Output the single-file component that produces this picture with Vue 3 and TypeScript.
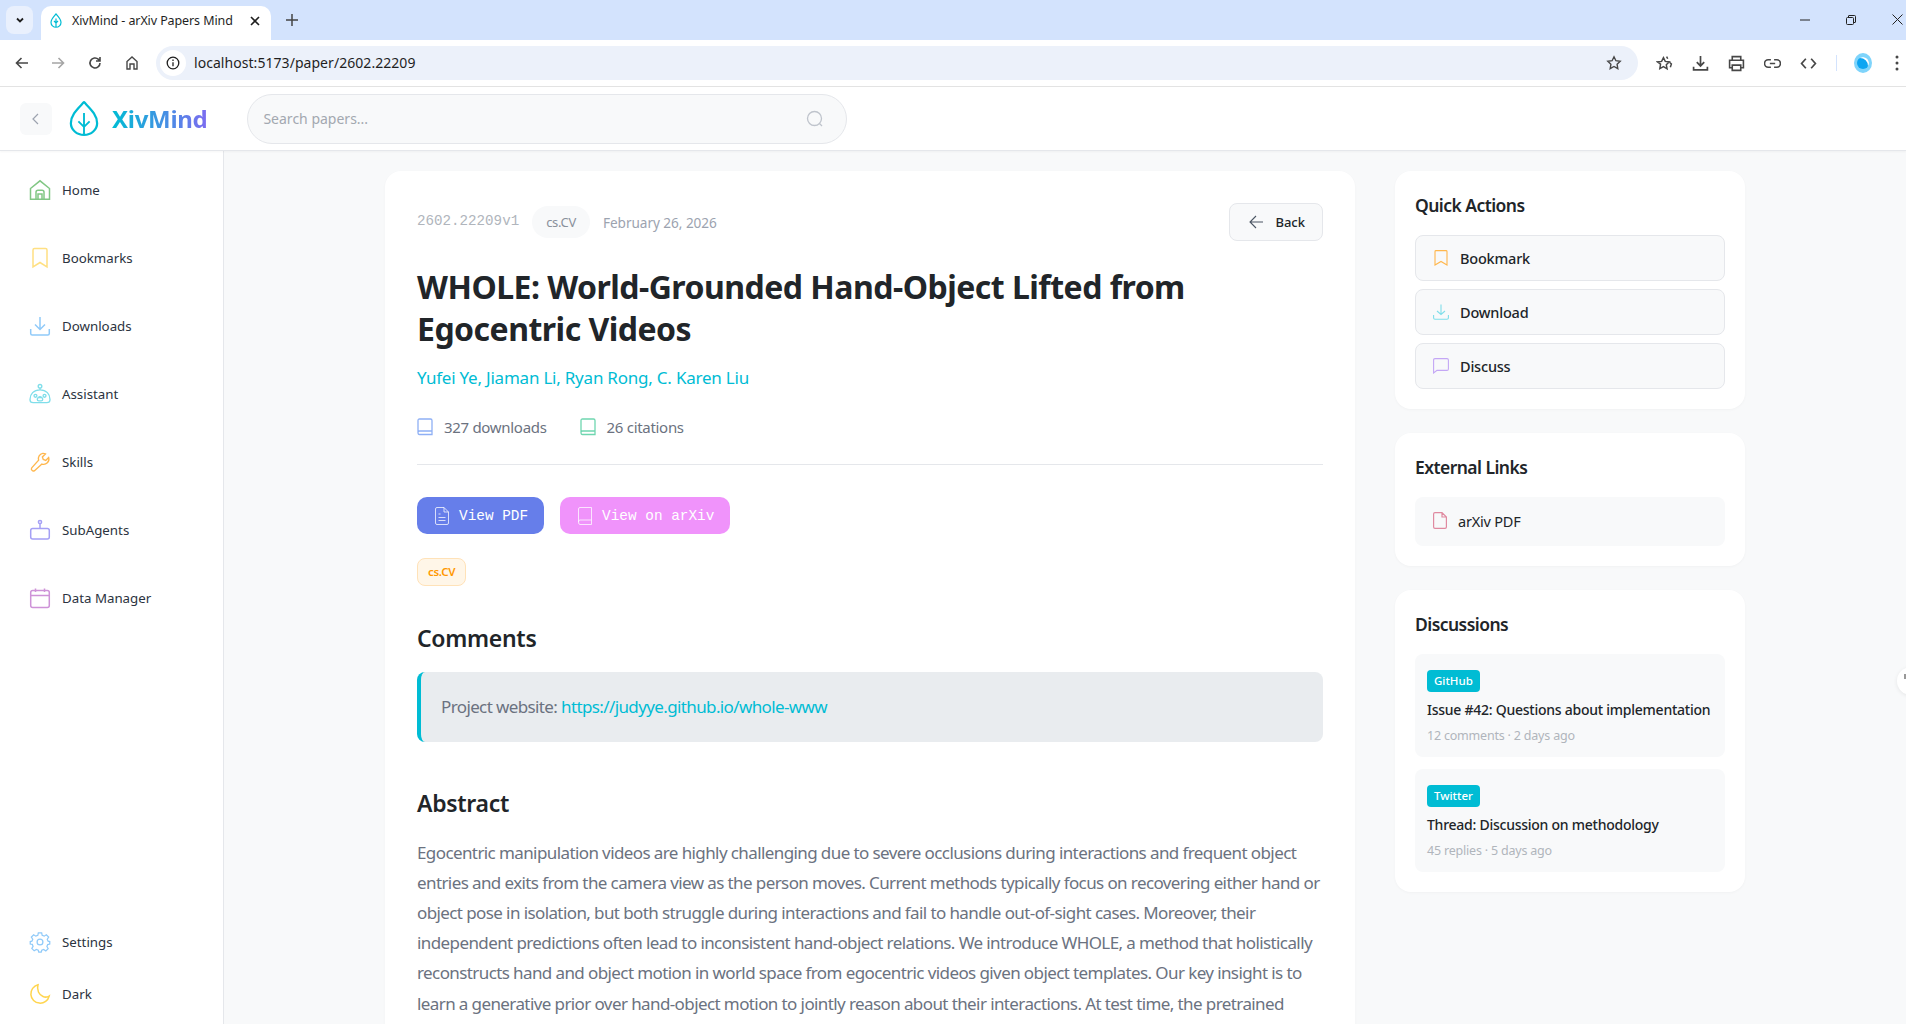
<script setup lang="ts">
const navTop = [
  { label: "Home", icon: "home" },
  { label: "Bookmarks", icon: "bookmarks" },
  { label: "Downloads", icon: "downloads" },
  { label: "Assistant", icon: "assistant" },
  { label: "Skills", icon: "skills" },
  { label: "SubAgents", icon: "subagents" },
  { label: "Data Manager", icon: "data" },
];

const abstractLines = [
  "Egocentric manipulation videos are highly challenging due to severe occlusions during interactions and frequent object",
  "entries and exits from the camera view as the person moves. Current methods typically focus on recovering either hand or",
  "object pose in isolation, but both struggle during interactions and fail to handle out-of-sight cases. Moreover, their",
  "independent predictions often lead to inconsistent hand-object relations. We introduce WHOLE, a method that holistically",
  "reconstructs hand and object motion in world space from egocentric videos given object templates. Our key insight is to",
  "learn a generative prior over hand-object motion to jointly reason about their interactions. At test time, the pretrained",
];

const discussions = [
  { tag: "GitHub", title: "Issue #42: Questions about implementation", meta: "12 comments · 2 days ago" },
  { tag: "Twitter", title: "Thread: Discussion on methodology", meta: "45 replies · 5 days ago" },
];
</script>

<template>
  <div class="window">
    <div class="tabstrip">
      <div class="tab-menu">
        <svg width="12" height="12" viewBox="0 0 12 12" fill="none" stroke="#1f1f1f" stroke-width="1.8"><path d="M3 4.500 6 7.500 9 4.500" /></svg>
      </div>
      <div class="tab">
        <svg width="12" height="15" viewBox="0 0 24 30" fill="none" stroke="#00bcd4" stroke-width="2.400"><path d="M12 2C6 9 2 13 2 19a10 9.500 0 0 0 20 0C22 13 18 9 12 2ZM12 11v18M8 16l4 4 4-4" /></svg>
        <span class="tab-title">XivMind - arXiv Papers Mind</span>
        <svg class="tab-close" width="10" height="10" viewBox="0 0 10 10" stroke="#1f1f1f" stroke-width="1.600"><path d="M1 1l8 8M9 1 1 9" /></svg>
      </div>
      <svg class="new-tab" width="12" height="12" viewBox="0 0 12 12" stroke="#444" stroke-width="1.500"><path d="M6 0v12M0 6h12" /></svg>
      <div class="win-controls">
        <svg width="10" height="10" viewBox="0 0 10 10" stroke="#222" fill="none"><path d="M0 5h10" /></svg>
        <svg width="10" height="10" viewBox="0 0 10 10" stroke="#222" fill="none"><rect x=".5" y="2.500" width="7" height="7" rx="1" /><path d="M2.500 2.500V1q0-.5.5-.5h5.500q1 0 1 1V7q0 .5-.5 .5H8" /></svg>
        <svg width="11" height="11" viewBox="0 0 11 11" stroke="#222" fill="none"><path d="M.5.500l10 10M10.500.500l-10 10" /></svg>
      </div>
    </div>

    <div class="toolbar">
      <svg width="16" height="16" viewBox="0 0 16 16" fill="none" stroke="#474747" stroke-width="1.600"><path d="M14 8H2.500M7.500 3 2.500 8l5 5" /></svg>
      <svg class="forward" width="16" height="16" viewBox="0 0 16 16" fill="none" stroke="#a5a5a5" stroke-width="1.600"><path d="M2 8h11.500M8.500 3l5 5-5 5" /></svg>
      <svg class="reload" width="16" height="16" viewBox="0 0 16 16" fill="none" stroke="#474747" stroke-width="1.600"><path d="M13 8a5 5 0 1 1-1.500-3.600L13 6M13 2v4H9" /></svg>
      <svg class="homebtn" width="16" height="16" viewBox="0 0 16 16" fill="none" stroke="#474747" stroke-width="1.400"><path d="M3 14V6.500L8 2l5 4.500V14h-3V9H6v5Z" /></svg>
      <div class="omnibox">
        <span class="site-info">
          <svg width="14" height="14" viewBox="0 0 14 14" fill="none" stroke="#1f1f1f" stroke-width="1.300"><circle cx="7" cy="7" r="5.800" /><path d="M7 6.200v4M7 3.500v1.400" /></svg>
        </span>
        <span class="url">localhost:5173/paper/2602.22209</span>
        <svg class="omni-star" width="16" height="16" viewBox="0 0 16 16" fill="none" stroke="#474747" stroke-width="1.400"><path d="m8 1.800 1.900 3.900 4.300.600-3.100 3 .7 4.300L8 11.500l-3.800 2.100.7-4.300-3.100-3 4.300-.600Z" /></svg>
      </div>
      <div class="ext-icons">
        <svg width="17" height="17" viewBox="0 0 16 16" fill="none" stroke="#474747" stroke-width="1.400"><path d="m7 2.500 1.700 3.500 3.800.500-2.800 2.700.7 3.800L7 11l-3.400 1.800.7-4.300L1.500 6.500l3.800-.500ZM10 1.500l1 2M13 7l1.500 1.500-1 3" /></svg>
        <svg width="17" height="17" viewBox="0 0 16 16" fill="none" stroke="#474747" stroke-width="1.600"><path d="M8 1v9M4.500 6.800 8 10.300l3.500-3.500M1.500 11v3h13v-3" /></svg>
        <svg width="17" height="17" viewBox="0 0 16 16" fill="none" stroke="#474747" stroke-width="1.500"><path d="M4 5V1.500h8V5M4 12H1.500V5h13v7H12M4 9.500h8v5H4Z" /></svg>
        <svg width="17" height="17" viewBox="0 0 16 16" fill="none" stroke="#474747" stroke-width="1.500"><path d="M6.500 4.500H4a3.500 3.500 0 0 0 0 7h2.500M9.500 4.500H12a3.500 3.500 0 0 1 0 7H9.500M5.500 8h5" /></svg>
        <svg width="17" height="17" viewBox="0 0 16 16" fill="none" stroke="#474747" stroke-width="1.600"><path d="M5.500 3.500 1.500 8l4 4.500M10.500 3.500l4 4.500-4 4.500" /></svg>
        <span class="ext-divider"></span>
        <span class="avatar"><span class="avatar-mark"></span></span>
        <svg class="kebab" width="4" height="16" viewBox="0 0 4 16" fill="#474747"><circle cx="2" cy="2" r="1.500" /><circle cx="2" cy="8" r="1.500" /><circle cx="2" cy="14" r="1.500" /></svg>
      </div>
    </div>

    <header class="app-header">
      <button type="button" class="collapse">
        <svg width="12" height="14" viewBox="0 0 12 14" fill="none" stroke="#9ca3af" stroke-width="1.200"><path d="M8 2 3 7l5 5" /></svg>
      </button>
      <div class="brand">
        <svg width="30" height="37" viewBox="0 0 32 38" fill="none" stroke="#00bcd4" stroke-width="2.400" stroke-linejoin="round"><path d="M16 1.500C9 9 2 15 2 24a14 12.500 0 0 0 28 0C30 15 23 9 16 1.500Z" /><path d="M16 13v23.500M10 22l6 6 6-6" stroke-width="2" /></svg>
        <span class="brand-name">XivMind</span>
      </div>
      <label class="search">
        <input type="search" placeholder="Search papers..." autocomplete="off" />
        <svg width="18" height="18" viewBox="0 0 18 18" fill="none" stroke="#bfc4cc" stroke-width="1.300"><circle cx="8.500" cy="8.500" r="7" /><path d="m13.500 13.500 2.500 2.500" /></svg>
      </label>
    </header>

    <div class="body">
      <aside class="sidebar">
        <nav class="nav">
          <a v-for="item in navTop" :key="item.label" class="nav-item">
            <svg v-if="item.icon === 'home'" class="nav-icon" viewBox="0 0 20 20" fill="none" stroke="#81c784"><path d="M.5 8.500 10 .8l9.500 7.700v10.700h-19ZM6 19.200v-7q0-2 2-2h4q2 0 2 2v7M8 19v-5h4v5" /></svg>
            <svg v-else-if="item.icon === 'bookmarks'" class="nav-icon" viewBox="0 0 20 20" fill="none" stroke="#ffe082"><path d="M3 2q0-1.500 1.500-1.500h11Q17 .5 17 2v17l-7-4.500L3 19Z" /></svg>
            <svg v-else-if="item.icon === 'downloads'" class="nav-icon" viewBox="0 0 20 20" fill="none" stroke="#90caf9"><path d="M10 1v12M5 8.500l5 5 5-5M.7 13v4.500q0 1.500 1.500 1.500h15.600q1.500 0 1.500-1.500V13" /></svg>
            <svg v-else-if="item.icon === 'assistant'" class="nav-icon wide" viewBox="0 0 24 22" fill="none" stroke="#80deea"><circle cx="12" cy="2.500" r="2" /><path d="M12 4.500v2M1 17c0-6 4-10.500 11-10.500S23 11 23 17q0 3.500-3.500 3.500h-15Q1 20.500 1 17Z" /><circle cx="7" cy="13" r="1.600" /><circle cx="17" cy="13" r="1.600" /><rect x="9" y="15" width="6" height="3.500" rx="1.700" /><path d="M10 15q2-2 4 0" /></svg>
            <svg v-else-if="item.icon === 'skills'" class="nav-icon wide" viewBox="0 0 22 22" fill="none" stroke="#ffb74d"><path d="M14 1.500a6 6 0 0 1 3 .600L13.600 5.500l1 2.700 2.700 1L20.500 6a5.800 5.800 0 0 1-7.400 7.300L5 20.500q-1.500 1-2.800-.300t-.300-2.800L9.500 9A5.800 5.800 0 0 1 14 1.500Z" /></svg>
            <svg v-else-if="item.icon === 'subagents'" class="nav-icon" viewBox="0 0 20 20" fill="none" stroke="#a5a0f5"><circle cx="10" cy="2" r="1.600" /><path d="M10 3.600v5" /><rect x=".7" y="8.600" width="18.600" height="10.500" rx="2" /></svg>
            <svg v-else class="nav-icon" viewBox="0 0 20 20" fill="none" stroke="#ce93d8"><rect x=".7" y="2.500" width="18.600" height="17" rx="2" /><path d="M.7 7.500h18.600M5.500.500v3.500M14.500.500v3.500" /></svg>
            <span>{{ item.label }}</span>
          </a>
        </nav>
        <div class="nav nav--bottom">
          <a class="nav-item nav-item--settings">
            <svg class="nav-icon wide" viewBox="0 0 24 24" fill="none" stroke="#90caf9"><circle cx="12" cy="12" r="3.500" /><path d="M10 1h4l.6 3 2.400 1 2.600-1.700 2.800 2.800L20.700 8.700l1 2.300 2 .5v3l-2.500.6-.9 2.300 1.500 2.600-2.800 2.800L16.400 21l-2.300.9-.6 2.100h-3l-.6-2.100-2.300-.9-2.600 1.600-2.800-2.800 1.500-2.600-.9-2.300L.3 14.500v-3l2-.5 1-2.300L1.600 6.100l2.800-2.800L7 5l2.400-1Z" /></svg>
            <span>Settings</span>
          </a>
          <a class="nav-item nav-item--dark">
            <svg class="nav-icon" viewBox="0 0 20 20" fill="none" stroke="#ffd54f"><path d="M8 .8a9.300 9.300 0 1 0 11.200 11.200c-1.500 1-4 1.500-6.200.500C9 11 6.500 6 8 .8Z" /></svg>
            <span>Dark</span>
          </a>
        </div>
      </aside>

      <main class="content">
        <div class="columns">
          <article class="paper">
            <div class="paper-meta">
              <span class="paper-id">2602.22209v1</span>
              <span class="cat-chip">cs.CV</span>
              <span class="paper-date">February 26, 2026</span>
              <button type="button" class="back">
                <svg width="16" height="16" viewBox="0 0 16 16" fill="none" stroke="#4b5563" stroke-width="1.100"><path d="M15 8H2M8 2 2 8l6 6" /></svg>
                Back
              </button>
            </div>
            <h1>WHOLE: World-Grounded Hand-Object Lifted from Egocentric Videos</h1>
            <p class="authors">Yufei Ye, Jiaman Li, Ryan Rong, C. Karen Liu</p>
            <div class="stats">
              <span class="stat">
                <svg width="16" height="18" viewBox="0 0 16 18" fill="none" stroke="#8fb0f5" stroke-width="1.300"><path d="M1 14.500V2.500Q1 1 2.500 1h11q1.500 0 1.500 1.500v14H2.500Q1 16.500 1 14.500Zm0 0Q1 13 2.500 13H15" /></svg>
                327 downloads
              </span>
              <span class="stat">
                <svg width="16" height="18" viewBox="0 0 16 18" fill="none" stroke="#6fd6b0" stroke-width="1.300"><path d="M1 14.500V2.500Q1 1 2.500 1h11q1.500 0 1.500 1.500v14H2.500Q1 16.500 1 14.500Zm0 0Q1 13 2.500 13H15" /></svg>
                26 citations
              </span>
            </div>
            <div class="actions">
              <a class="btn btn--pdf">
                <svg width="14" height="18" viewBox="0 0 14 18" fill="none" stroke="#fff" stroke-opacity=".75" stroke-width="1"><path d="M9 .5H2Q.5.500.5 2v14q0 1.500 1.500 1.500h10q1.500 0 1.500-1.500V5ZM9 .5V5h4.500M3.500 7h2M3.500 10.500h7M3.500 13.500h7" /></svg>
                View PDF
              </a>
              <a class="btn btn--arxiv">
                <svg width="14" height="18" viewBox="0 0 14 18" fill="none" stroke="#fff" stroke-opacity=".75" stroke-width="1"><path d="M.5 15V2Q.5.500 2 .500h11.500v17H2Q.5 17.500.5 15Zm0 0Q.5 13 2 13h11.500" /></svg>
                View on arXiv
              </a>
            </div>
            <span class="tag">cs.CV</span>
            <h2 class="section-title">Comments</h2>
            <div class="comment">
              Project website: <a>https://judyye.github.io/whole-www</a>
            </div>
            <h2 class="section-title section-title--abstract">Abstract</h2>
            <p class="abstract">
              <span v-for="line in abstractLines" :key="line">{{ line }}</span>
            </p>
          </article>

          <div class="rail">
            <section class="card">
              <h3>Quick Actions</h3>
              <div class="stack">
                <a class="quick">
                  <svg width="16" height="16" viewBox="-1 0 16 16" fill="none" stroke="#ffb74d" stroke-width="1.100"><path d="M1 1.500Q1 .6 2 .6h10q1 0 1 .9V15l-6-3.500L1 15Z" /></svg>
                  Bookmark
                </a>
                <a class="quick">
                  <svg width="16" height="16" viewBox="0 0 16 16" fill="none" stroke="#80deea" stroke-width="1.100"><path d="M8 .5v10M4 7l4 3.500L12 7M.6 11v3q0 1.200 1.400 1.200h12q1.400 0 1.400-1.200v-3" /></svg>
                  Download
                </a>
                <a class="quick">
                  <svg width="16" height="16" viewBox="0 0 16 16" fill="none" stroke="#c4a7f5" stroke-width="1.100"><path d="M.6 2Q.6.600 2 .600h12q1.400 0 1.400 1.400v9q0 1.400-1.400 1.400H4l-3.400 2.600Z" /></svg>
                  Discuss
                </a>
              </div>
            </section>

            <section class="card">
              <h3>External Links</h3>
              <a class="ext-link">
                <svg width="14" height="17" viewBox="0 0 14 17" fill="none" stroke="#e08aa0" stroke-width="1.200"><path d="M9 .6H2Q.6.600.6 2v13q0 1.400 1.400 1.400h10q1.400 0 1.400-1.400V5ZM9 .6V5h4.400" /></svg>
                arXiv PDF
              </a>
            </section>

            <section class="card">
              <h3>Discussions</h3>
              <div class="stack stack--disc">
                <div v-for="d in discussions" :key="d.tag" class="disc">
                  <span class="disc-tag">{{ d.tag }}</span>
                  <div class="disc-title">{{ d.title }}</div>
                  <div class="disc-meta">{{ d.meta }}</div>
                </div>
              </div>
            </section>
          </div>
        </div>
      </main>
    </div>

    <span class="edge-handle"></span>
  </div>
</template>

<style>
html,
body {
  margin: 0;
  height: 100%;
  overflow: hidden;
}
</style>

<style scoped>
* {
  box-sizing: border-box;
}

.window {
  position: relative;
  display: flex;
  flex-direction: column;
  width: 1906px;
  height: 1024px;
  overflow: hidden;
  background: #f8f9fa;
  color: #212529;
  font-family: "Noto Sans", "Open Sans", sans-serif;
}

.tabstrip {
  display: flex;
  align-items: flex-end;
  flex: none;
  height: 40px;
  padding-left: 6px;
  background: #d3e3fd;
}

.tab-menu {
  display: grid;
  place-items: center;
  width: 27px;
  height: 28px;
  margin-bottom: 6px;
  border-radius: 8px;
  background: #e9f0fd;
}

.tab {
  display: flex;
  align-items: center;
  width: 230px;
  height: 34px;
  margin-left: 8px;
  padding: 0 11px 5px 9px;
  border-radius: 10px 10px 0 0;
  background: #fff;
}

.tab-title {
  flex: 1;
  margin-left: 10px;
  color: #1f1f1f;
  font-size: 12.500px;
  letter-spacing: -0.1px;
  white-space: nowrap;
}

.new-tab {
  margin: 0 0 14px 15px;
}

.win-controls {
  display: flex;
  align-items: center;
  gap: 36px;
  margin-left: auto;
  margin-bottom: 15px;
  padding-right: 3px;
}

.toolbar {
  display: flex;
  align-items: center;
  flex: none;
  height: 47px;
  padding-left: 14px;
  border-bottom: 1px solid #e3e3e3;
  background: #fff;
}

.forward {
  margin-left: 20px;
}

.reload,
.homebtn {
  margin-left: 21px;
}

.omnibox {
  display: flex;
  align-items: center;
  width: 1482px;
  height: 34px;
  margin-left: 16px;
  padding: 0 16px 0 4px;
  border-radius: 17px;
  background: #ecf1fa;
}

.site-info {
  display: grid;
  place-items: center;
  width: 26px;
  height: 26px;
  border-radius: 50%;
  background: #fff;
}

.url {
  margin: -2px 0 0 8px;
  color: #1f1f1f;
  font-size: 14px;
  letter-spacing: 0.05px;
}

.omni-star {
  margin-left: auto;
}

.ext-icons {
  display: flex;
  align-items: center;
  gap: 19.100px;
  margin-left: 17.500px;
}

.ext-divider {
  width: 1px;
  height: 16px;
  background: #d3e3fd;
}

.avatar {
  display: grid;
  place-items: center;
  width: 18px;
  height: 20px;
  margin-left: -2px;
  border-radius: 50%;
  background: #7fd4fb;
}

.avatar-mark {
  width: 12px;
  height: 12px;
  border-radius: 50%;
  background: #0ca5f2;
  box-shadow: inset -3px 3px 0 -2px #fff;
}

.kebab {
  margin-left: 4px;
}

.app-header {
  z-index: 1;
  display: flex;
  align-items: center;
  flex: none;
  height: 64px;
  padding-left: 20px;
  border-bottom: 1px solid #e5e7eb;
  background: #fff;
  box-shadow: 0 1px 2px rgba(0, 0, 0, 0.04);
}

.collapse {
  display: grid;
  place-items: center;
  width: 32px;
  height: 32px;
  padding: 0;
  border: 0;
  border-radius: 6px;
  background: #f8f9fa;
}

.brand {
  display: flex;
  align-items: center;
  gap: 13px;
  margin-left: 17px;
}

.brand-name {
  background: linear-gradient(90deg, #00bcd4, #7c6cf0);
  -webkit-background-clip: text;
  background-clip: text;
  color: transparent;
  font-size: 24px;
  font-weight: 700;
  letter-spacing: -0.3px;
}

.search {
  display: flex;
  align-items: center;
  width: 600px;
  height: 50px;
  margin-left: 40px;
  padding: 0 22px 0 15px;
  border: 1px solid #e5e7eb;
  border-radius: 25px;
  background: #f8f9fa;
}

.search input {
  flex: 1;
  min-width: 0;
  padding: 0;
  border: 0;
  outline: 0;
  background: transparent;
  color: #212529;
  font: inherit;
  font-size: 14px;
}

.search input::placeholder {
  color: #a3a8b0;
}

.body {
  display: flex;
  flex: 1;
  min-height: 0;
}

.sidebar {
  display: flex;
  flex-direction: column;
  flex: none;
  justify-content: space-between;
  width: 224px;
  padding: 5px 0 0 28px;
  border-right: 1px solid #e5e7eb;
  background: #fff;
}

.nav {
  display: flex;
  flex-direction: column;
}

.nav-item {
  display: flex;
  align-items: center;
  height: 68px;
  color: #2b3340;
  font-size: 13.300px;
}

.nav-item--settings {
  height: 52px;
}

.nav-item--dark {
  height: 52px;
  margin-bottom: 4px;
}

.nav-icon {
  flex: none;
  width: 20px;
  height: 20px;
  margin: 0 12px 0 2px;
  overflow: visible;
  stroke-width: 1.500;
}

.nav-icon.wide {
  width: 24px;
  margin: 0 10px 0 0;
}

.content {
  flex: 1;
  min-width: 0;
  padding: 20px 0;
  overflow: hidden;
}

.columns {
  display: grid;
  grid-template-columns: 970px 350px;
  gap: 40px;
  justify-content: center;
  align-items: start;
}

.paper {
  padding: 32px;
  border-radius: 16px;
  background: #fff;
  box-shadow: 0 1px 3px rgba(0, 0, 0, 0.03);
}

.paper-meta {
  display: flex;
  align-items: center;
  height: 38px;
  color: #9ca3af;
  font-size: 13.600px;
}

.paper-id {
  margin-top: -3px;
  color: #b0b5bc;
  font-family: "Liberation Mono", monospace;
  font-size: 14.200px;
}

.cat-chip {
  margin-left: 13px;
  padding: 7px 14px;
  border-radius: 16px;
  background: #f8f9fa;
  color: #8a919c;
  font-size: 13px;
  letter-spacing: -0.3px;
}

.paper-date {
  margin-left: 13px;
  letter-spacing: -0.05px;
}

.back {
  display: flex;
  align-items: center;
  gap: 11px;
  height: 38px;
  margin-left: auto;
  padding: 0 17px 0 18px;
  border: 1px solid #e5e7eb;
  border-radius: 8px;
  background: #f8f9fa;
  color: #212529;
  font: inherit;
  font-size: 13px;
  font-weight: 500;
}

h1 {
  margin: 25px 0 0;
  color: #212529;
  font-size: 32px;
  font-weight: 700;
  line-height: 42px;
  letter-spacing: -0.52px;
}

.authors {
  margin: 16px 0 0;
  color: #00bcd4;
  font-size: 17px;
  line-height: 24px;
  letter-spacing: -0.22px;
}

.stats {
  display: flex;
  gap: 33px;
  margin-top: 25px;
  padding-bottom: 25px;
  border-bottom: 1px solid #e5e7eb;
  color: #6b7280;
  font-size: 15px;
  line-height: 24px;
  letter-spacing: -0.3px;
}

.stat {
  display: flex;
  align-items: center;
  gap: 11px;
}

.actions {
  display: flex;
  gap: 16px;
  margin-top: 32px;
}

.btn {
  display: flex;
  align-items: center;
  gap: 10px;
  height: 37px;
  padding: 0 16px 0 18px;
  border-radius: 10px;
  color: #fff;
  font-family: "Liberation Mono", monospace;
  font-size: 14.400px;
}

.btn--pdf {
  background: #667eea;
}

.btn--arxiv {
  background: #f093fb;
}

.tag {
  display: block;
  width: fit-content;
  margin-top: 24px;
  padding: 0 10px;
  border: 1px solid #ffe2b8;
  border-radius: 8px;
  background: #fff6e8;
  color: #ff9800;
  font-size: 11.500px;
  font-weight: 600;
  line-height: 26px;
  letter-spacing: -0.3px;
}

.section-title {
  margin: 36px 0 0;
  color: #212529;
  font-size: 23px;
  font-weight: 600;
  line-height: 32px;
  letter-spacing: -0.3px;
}

.section-title--abstract {
  margin-top: 45px;
}

.comment {
  margin-top: 18px;
  padding-left: 20px;
  border-left: 4px solid #00bcd4;
  border-radius: 8px;
  background: #e9ecef;
  color: #6b7280;
  font-size: 17px;
  line-height: 70px;
  letter-spacing: -0.62px;
}

.comment a {
  color: #00bcd4;
}

.abstract {
  margin: 18.500px 0 0;
  color: #6b7280;
  font-size: 17px;
  line-height: 30.200px;
  letter-spacing: -0.6px;
}

.abstract span {
  display: block;
  white-space: nowrap;
}

.rail {
  display: flex;
  flex-direction: column;
  gap: 24px;
}

.card {
  padding: 20px;
  border-radius: 16px;
  background: #fff;
  box-shadow: 0 1px 3px rgba(0, 0, 0, 0.03);
}

h3 {
  margin: 0 0 16px;
  color: #212529;
  font-size: 17.500px;
  font-weight: 600;
  line-height: 28px;
  letter-spacing: -0.55px;
}

.stack {
  display: flex;
  flex-direction: column;
  gap: 8px;
}

.stack--disc {
  gap: 12px;
}

.quick {
  display: flex;
  align-items: center;
  gap: 11px;
  height: 46px;
  padding-left: 17px;
  border: 1px solid #e5e7eb;
  border-radius: 8px;
  background: #f8f9fa;
  color: #212529;
  font-size: 14.500px;
  font-weight: 500;
  letter-spacing: -0.2px;
}

.ext-link {
  display: flex;
  align-items: center;
  gap: 11px;
  height: 49px;
  padding: 0 0 2px 18px;
  border-radius: 8px;
  background: #f8f9fa;
  color: #212529;
  font-size: 14.500px;
  letter-spacing: -0.2px;
}

.disc {
  padding: 16px 12px 11px;
  border-radius: 8px;
  background: #f8f9fa;
}

.disc-tag {
  display: block;
  width: fit-content;
  padding: 0 7px;
  border-radius: 4px;
  background: #00bcd4;
  color: #fff;
  font-size: 11.500px;
  font-weight: 500;
  line-height: 22px;
}

.disc-title {
  margin-top: 7px;
  color: #212529;
  font-size: 14px;
  font-weight: 500;
  line-height: 22px;
  letter-spacing: -0.25px;
  white-space: nowrap;
}

.disc-meta {
  margin-top: 5px;
  color: #b0b5bc;
  font-size: 12.500px;
  line-height: 20px;
  letter-spacing: -0.2px;
}

.edge-handle {
  position: absolute;
  top: 667px;
  left: 1897px;
  width: 28px;
  height: 28px;
  border-radius: 50%;
  background: #fff;
  box-shadow: 0 1px 4px rgba(0, 0, 0, 0.08);
}

.edge-handle::after {
  content: "";
  position: absolute;
  top: 7px;
  left: 7px;
  width: 2px;
  height: 5px;
  background: #999;
}
</style>
